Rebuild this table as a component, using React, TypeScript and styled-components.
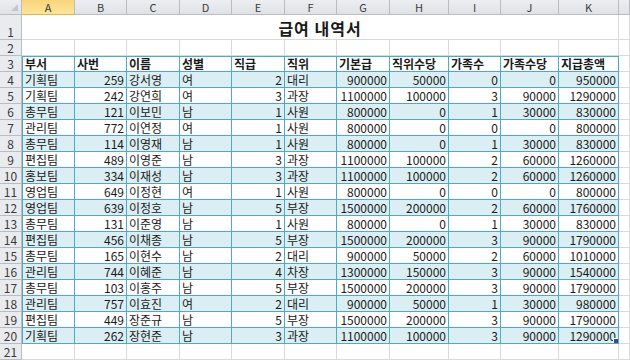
import React from "react";
import styled, { createGlobalStyle, css } from "styled-components";

const GlobalStyle = createGlobalStyle`
  html, body {
    margin: 0;
    padding: 0;
    background: #ffffff;
  }
  body {
    font-family: "Noto Sans CJK KR", "Noto Sans", sans-serif;
    overflow: hidden;
  }
`;

const palette = {
  grid: "#d9d9d9",
  headBorder: "#b9bcc2",
  headBg: "#e6e8ec",
  headText: "#3a3a3a",
  selBg: "#fbdc86",
  teal: "#4bacc6",
  band: "#daeef3",
  text: "#1a1a1a",
};

const COLS = [53, 52, 53, 52, 53, 52, 53, 59, 52, 58, 60];
const LETTERS = ["A", "B", "C", "D", "E", "F", "G", "H", "I", "J", "K"];

const Sheet = styled.div`
  display: grid;
  grid-template-columns: 22px ${COLS.map((w) => `${w}px`).join(" ")} 1fr;
  grid-template-rows: 15px 25px repeat(19, 16px);
  width: 630px;
  height: 360px;
  overflow: hidden;
  color: ${palette.text};
`;

const Corner = styled.div`
  position: relative;
  background: linear-gradient(#eceef1, #dfe2e6);
  border-right: 1px solid ${palette.headBorder};
  border-bottom: 1px solid ${palette.headBorder};

  &::after {
    content: "";
    position: absolute;
    right: 3px;
    bottom: 3px;
    border-left: 7px solid transparent;
    border-bottom: 7px solid #c3c6cb;
  }
`;

const ColHead = styled.div<{ $selected?: boolean }>`
  display: flex;
  align-items: center;
  justify-content: center;
  font-size: 11px;
  line-height: 14px;
  color: ${palette.headText};
  background: ${(p) =>
    p.$selected
      ? "linear-gradient(#f8d57a, #fde49c)"
      : "linear-gradient(#eceef1, #dfe2e6)"};
  border-right: 1px solid ${palette.headBorder};
  border-bottom: 1px solid ${(p) => (p.$selected ? "#e3b44a" : palette.headBorder)};
  box-sizing: border-box;
`;

const RowHead = styled.div`
  display: flex;
  align-items: flex-end;
  justify-content: center;
  font-size: 12px;
  line-height: 15px;
  color: ${palette.headText};
  background: #e9ebee;
  border-right: 1px solid ${palette.headBorder};
  border-bottom: 1px solid ${palette.headBorder};
  box-sizing: border-box;
`;

const Title = styled.div`
  grid-column: 2 / 13;
  display: flex;
  align-items: flex-end;
  justify-content: center;
  font-size: 16px;
  font-weight: 700;
  line-height: 22px;
  letter-spacing: 1px;
  border-right: 1px solid ${palette.grid};
  border-bottom: 1px solid ${palette.grid};
  box-sizing: border-box;
`;

const Cell = styled.div<{
  $right?: boolean;
  $bold?: boolean;
  $band?: boolean;
  $table?: boolean;
  $first?: boolean;
  $top?: boolean;
}>`
  position: relative;
  display: flex;
  align-items: flex-end;
  justify-content: ${(p) => (p.$right ? "flex-end" : "flex-start")};
  padding: 0 2px 0 2px;
  font-size: 12px;
  line-height: 15px;
  font-weight: ${(p) => (p.$bold ? 700 : 400)};
  white-space: nowrap;
  overflow: hidden;
  background: ${(p) => (p.$band ? palette.band : "#ffffff")};
  border-right: 1px solid ${palette.grid};
  border-bottom: 1px solid ${palette.grid};
  box-sizing: border-box;

  ${(p) =>
    p.$table &&
    css`
      border-right-color: ${palette.teal};
      border-bottom-color: ${palette.teal};
    `}
  ${(p) =>
    p.$first &&
    css`
      border-left: 1px solid ${palette.teal};
    `}
  ${(p) =>
    p.$top &&
    css`
      border-top: 1px solid ${palette.teal};
    `}
`;

const FillHandle = styled.span`
  position: absolute;
  right: -1px;
  bottom: -1px;
  width: 4px;
  height: 4px;
  background: #2f4f8f;
  border: 1px solid #ffffff;
`;

const headers = ["부서", "사번", "이름", "성별", "직급", "직위", "기본급", "직위수당", "가족수", "가족수당", "지급총액"];

const rows: (string | number)[][] = [
  ["기획팀", 259, "강서영", "여", 2, "대리", 900000, 50000, 0, 0, 950000],
  ["기획팀", 242, "강연희", "여", 3, "과장", 1100000, 100000, 3, 90000, 1290000],
  ["총무팀", 121, "이보민", "남", 1, "사원", 800000, 0, 1, 30000, 830000],
  ["관리팀", 772, "이연정", "여", 1, "사원", 800000, 0, 0, 0, 800000],
  ["총무팀", 114, "이영재", "남", 1, "사원", 800000, 0, 1, 30000, 830000],
  ["편집팀", 489, "이영준", "남", 3, "과장", 1100000, 100000, 2, 60000, 1260000],
  ["홍보팀", 334, "이재성", "남", 3, "과장", 1100000, 100000, 2, 60000, 1260000],
  ["영업팀", 649, "이정현", "여", 1, "사원", 800000, 0, 0, 0, 800000],
  ["영업팀", 639, "이정호", "남", 5, "부장", 1500000, 200000, 2, 60000, 1760000],
  ["총무팀", 131, "이준영", "남", 1, "사원", 800000, 0, 1, 30000, 830000],
  ["편집팀", 456, "이채종", "남", 5, "부장", 1500000, 200000, 3, 90000, 1790000],
  ["총무팀", 165, "이현수", "남", 2, "대리", 900000, 50000, 2, 60000, 1010000],
  ["관리팀", 744, "이혜준", "남", 4, "차장", 1300000, 150000, 3, 90000, 1540000],
  ["총무팀", 103, "이홍주", "남", 5, "부장", 1500000, 200000, 3, 90000, 1790000],
  ["관리팀", 757, "이효진", "여", 2, "대리", 900000, 50000, 1, 30000, 980000],
  ["편집팀", 449, "장준규", "남", 5, "부장", 1500000, 200000, 3, 90000, 1790000],
  ["기획팀", 262, "장현준", "남", 3, "과장", 1100000, 100000, 3, 90000, 1290000],
];

const App = () => {
  return (
    <>
      <GlobalStyle />
      <Sheet>
        <Corner />
        {LETTERS.map((l, i) => (
          <ColHead key={l} $selected={i === 0}>
            {l}
          </ColHead>
        ))}
        <ColHead />

        <RowHead>1</RowHead>
        <Title>급여 내역서</Title>
        <Cell />

        <RowHead>2</RowHead>
        {LETTERS.map((l) => (
          <Cell key={l} />
        ))}
        <Cell />

        <RowHead>3</RowHead>
        {headers.map((h, i) => (
          <Cell key={h} $bold $table $top $first={i === 0}>
            {h}
          </Cell>
        ))}
        <Cell />

        {rows.map((row, r) => (
          <React.Fragment key={r}>
            <RowHead>{r + 4}</RowHead>
            {row.map((v, c) => (
              <Cell
                key={c}
                $table
                $band={r % 2 === 0}
                $first={c === 0}
                $right={typeof v === "number"}
              >
                {v}
                {r === rows.length - 1 && c === row.length - 1 && <FillHandle />}
              </Cell>
            ))}
            <Cell />
          </React.Fragment>
        ))}

        <RowHead>21</RowHead>
        {LETTERS.map((l) => (
          <Cell key={l} />
        ))}
        <Cell />
      </Sheet>
    </>
  );
};

export default App;
